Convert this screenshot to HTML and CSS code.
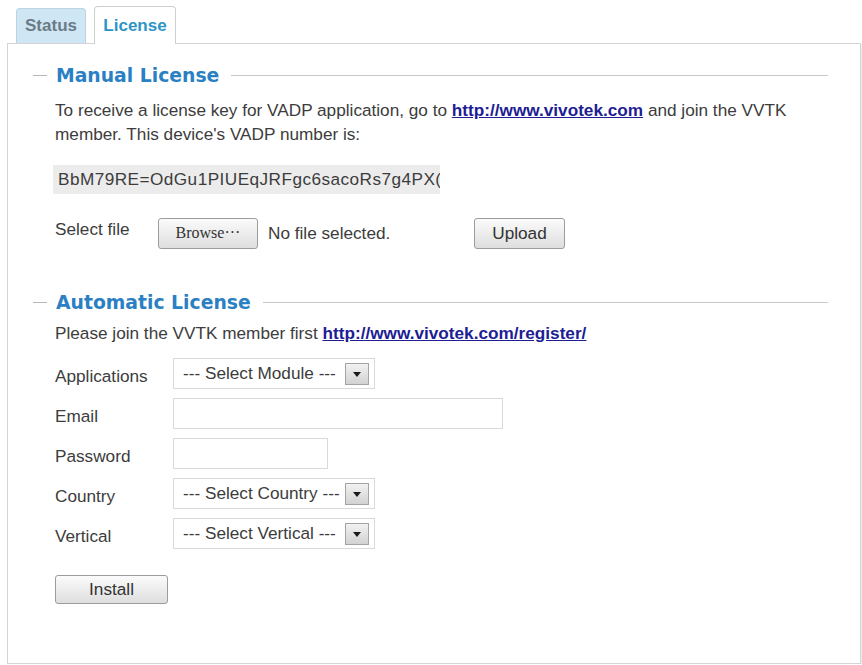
FILE: index.html
```html
<!DOCTYPE html>
<html lang="en">
<head>
  <meta charset="UTF-8">
  <title>License</title>
  <link rel="stylesheet" href="styles.css">
</head>
<body>

  <div class="tabs">
    <div class="tab">Status</div>
    <div class="tab active">License</div>
  </div>

  <div class="panel">
    <div class="section-title">
      <span class="dash"></span>
      <span class="title-text">Manual License</span>
      <span class="rule"></span>
    </div>

    <div class="section-body">
      <p class="intro">To receive a license key for VADP application, go to <a href="#">http://www.vivotek.com</a> and join the VVTK member. This device's VADP number is:</p>

      <div class="vadp">BbM79RE=OdGu1PIUEqJRFgc6sacoRs7g4PX(</div>

      <div class="file-row">
        <span class="file-label">Select file</span>
        <button class="btn browse">Browse···</button>
        <span class="file-name">No file selected.</span>
        <button class="btn upload">Upload</button>
      </div>
    </div>

    <div class="section-title auto">
      <span class="dash"></span>
      <span class="title-text">Automatic License</span>
      <span class="rule"></span>
    </div>

    <div class="section-body">
      <p class="join">Please join the VVTK member first <a href="#">http://www.vivotek.com/register/</a></p>

      <div class="form">
        <div class="row">
          <label>Applications</label>
          <div class="select"><span>--- Select Module ---</span><span class="arrow"></span></div>
        </div>
        <div class="row">
          <label>Email</label>
          <input type="text" class="field email" />
        </div>
        <div class="row">
          <label>Password</label>
          <input type="password" class="field password" />
        </div>
        <div class="row">
          <label>Country</label>
          <div class="select"><span>--- Select Country ---</span><span class="arrow"></span></div>
        </div>
        <div class="row">
          <label>Vertical</label>
          <div class="select"><span>--- Select Vertical ---</span><span class="arrow"></span></div>
        </div>
      </div>

      <button class="btn install">Install</button>
    </div>
  </div>

</body>
</html>
```

FILE: styles.css
```css
body {
  margin: 0;
  background-color: #fff;
  font-family: "Liberation Sans", Arial, sans-serif;
  font-size: 17.2px;
  color: #3c3c3c;
}

.tabs {
  display: flex;
  align-items: flex-end;
  gap: 8px;
  padding: 6px 0 0 16px;
}

.tab {
  box-sizing: border-box;
  width: 70px;
  height: 35px;
  line-height: 34px;
  text-align: center;
  font-size: 17px;
  font-weight: bold;
  color: #6b7b86;
  background-color: #cfe7f5;
  border: 1px solid #bcd3e0;
  border-bottom: none;
  border-radius: 4px 4px 0 0;
}

.tab.active {
  position: relative;
  z-index: 1;
  width: 82px;
  height: 38px;
  line-height: 37px;
  margin-bottom: -1px;
  color: #2d94c6;
  background-color: #fff;
  border-color: #cfcfcf;
}

.panel {
  box-sizing: border-box;
  width: 854px;
  height: 621px;
  margin-left: 7px;
  padding: 20px 32px 0 25px;
  border: 1px solid #d4d4d4;
  box-shadow: 1px 1px 0 #ececec;
}

.section-title {
  display: flex;
  align-items: center;
  height: 22px;
}

.section-title.auto {
  margin-top: 42px;
}

.dash {
  width: 14px;
  height: 1px;
  margin-right: 9px;
  background-color: #b8b8b8;
}

.title-text {
  font-family: "DejaVu Sans", Verdana, sans-serif;
  font-size: 18.8px;
  font-weight: bold;
  color: #2b7fc3;
  white-space: nowrap;
}

.rule {
  flex: 1;
  height: 1px;
  margin-left: 12px;
  background-color: #c8c8c8;
}

.section-body {
  margin-left: 22px;
}

p {
  margin: 0;
  line-height: 24px;
}

.intro {
  margin-top: 12px;
}

a {
  color: #1d1d94;
  font-weight: bold;
}

.vadp {
  box-sizing: border-box;
  width: 387px;
  height: 29px;
  margin: 19px 0 0 -2px;
  padding-left: 5px;
  line-height: 29px;
  background-color: #ececec;
  letter-spacing: 0.45px;
  white-space: nowrap;
  overflow: hidden;
}

.file-row {
  display: flex;
  align-items: center;
  margin-top: 23px;
  height: 32px;
}

.file-label {
  width: 103px;
  margin-top: -8px;
}

.file-name {
  width: 206px;
  margin-left: 10px;
}

.btn {
  box-sizing: border-box;
  height: 31px;
  padding: 0;
  border: 1px solid #9c9c9c;
  border-radius: 3px;
  background: linear-gradient(#fbfbfb, #dedede);
  font-family: "Liberation Sans", Arial, sans-serif;
  font-size: 17.2px;
  color: #333;
  cursor: pointer;
}

.browse {
  width: 100px;
  font-family: "Liberation Serif", "Times New Roman", serif;
  font-size: 16px;
}

.upload {
  width: 91px;
}

.join {
  margin-top: 8px;
}

.form {
  display: flex;
  flex-direction: column;
  gap: 9px;
  margin-top: 13px;
}

.row {
  display: flex;
  align-items: center;
  height: 31px;
}

.row label {
  width: 118px;
  padding-top: 5px;
}

.select {
  box-sizing: border-box;
  display: flex;
  align-items: center;
  justify-content: space-between;
  width: 202px;
  height: 31px;
  padding: 0 5px 0 9px;
  border: 1px solid #d9d9d9;
  background-color: #fff;
  white-space: nowrap;
}

.arrow {
  box-sizing: border-box;
  display: flex;
  align-items: center;
  justify-content: center;
  width: 24px;
  height: 22px;
  border: 1px solid #a4a4a4;
  background: linear-gradient(#f2f2f2, #d2d2d2);
}

.arrow::after {
  content: "";
  margin-top: 2px;
  border-left: 4px solid transparent;
  border-right: 4px solid transparent;
  border-top: 5px solid #1a1a1a;
}

.field {
  box-sizing: border-box;
  height: 31px;
  margin: 0;
  border: 1px solid #d9d9d9;
  outline: none;
}

.email {
  width: 330px;
}

.password {
  width: 155px;
}

.install {
  width: 113px;
  height: 29px;
  margin-top: 26px;
}
```
